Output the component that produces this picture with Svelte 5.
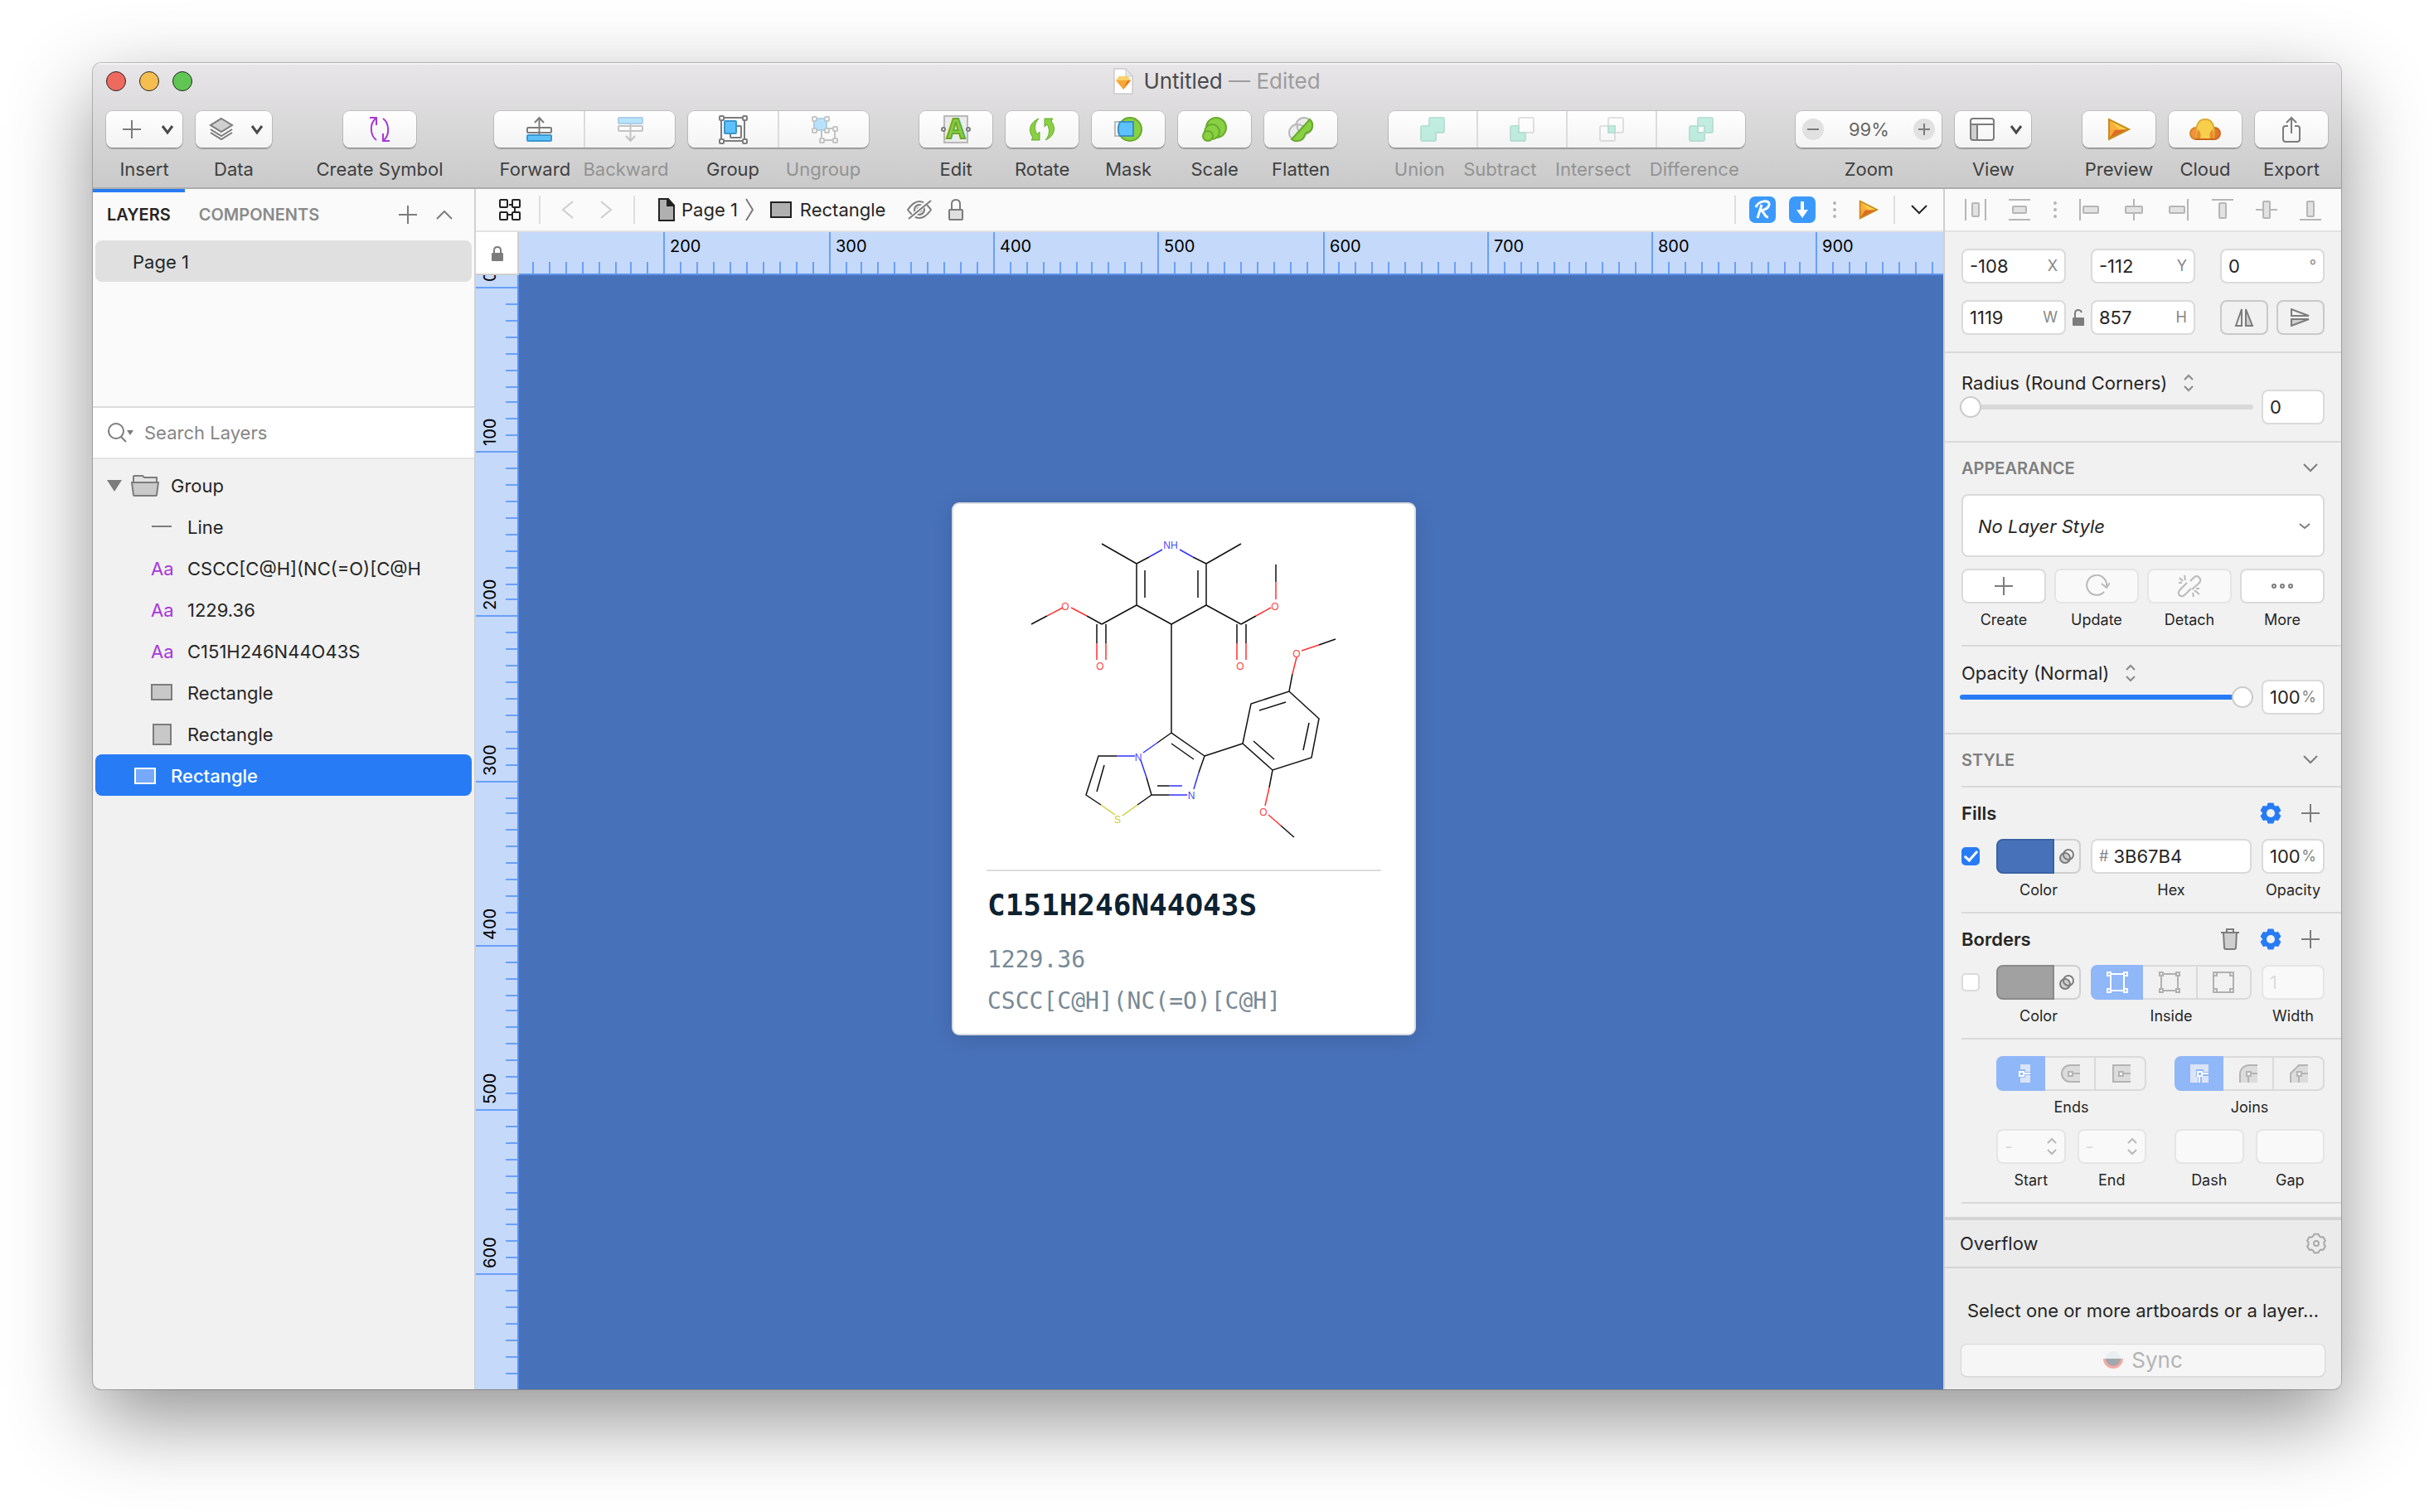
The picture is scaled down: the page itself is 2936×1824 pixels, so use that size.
<script>
  const H_SCALE = 1.986;
  const V_SCALE = 1.984;
  const even = (v) => 2 * Math.round(v / 2);

  const hTicks = Array.from({ length: 86 }, (_, i) => {
    const value = 120 + i * 10;
    return { value, at: even(174.6 + (value - 200) * H_SCALE), major: value % 100 === 0 };
  });
  const vTicks = Array.from({ length: 68 }, (_, i) => {
    const value = i * 10;
    return { value, at: even(14 + value * V_SCALE), major: value % 100 === 0 };
  });

  const layers = [
    { name: 'Line', icon: 'line' },
    { name: 'CSCC[C@H](NC(=O)[C@H', icon: 'text' },
    { name: '1229.36', icon: 'text' },
    { name: 'C151H246N44O43S', icon: 'text' },
    { name: 'Rectangle', icon: 'rect' },
    { name: 'Rectangle', icon: 'tallrect' }
  ];

  const shapeTools = ['Edit', 'Rotate', 'Mask', 'Scale', 'Flatten'];
  const booleanTools = ['Union', 'Subtract', 'Intersect', 'Difference'];
  const styleActions = [
    { name: 'Create', off: false },
    { name: 'Update', off: true },
    { name: 'Detach', off: true },
    { name: 'More', off: false }
  ];
  const alignTools = ['distH', 'distV', 'dots', 'alignL', 'alignC', 'alignR', 'alignT', 'alignM', 'alignB'];

  function gear(c, outer, inner) {
    const pts = [];
    for (let i = 0; i < 6; i++) {
      for (const [deg, r] of [[-22, inner], [-13, outer], [13, outer], [22, inner]]) {
        const a = ((i * 60 + deg - 90) * Math.PI) / 180;
        pts.push(`${(c + r * Math.cos(a)).toFixed(2)} ${(c + r * Math.sin(a)).toFixed(2)}`);
      }
    }
    return `M${pts.join('L')}Z`;
  }

  const bonds = [
    ['k', 'M181 50 223 74M307 74 349 50M223 74V124M307 74V124M233 82V115M297 82V115M223 124 265 147M307 124 265 147M223 124 181 147M307 124 349 147M223 74 238 66M307 74 291 66'],
    ['b', 'M238 66 254 57M291 66 275 57'],
    ['k', 'M181 147 163 137M96 147 115 137M349 147 367 137M391 75V96M175 147V170M186 147V170M344 147V170M355 147V170'],
    ['r', 'M163 137 144 127M115 137 134 127M367 137 385 127M391 96V117M175 170V190M186 170V190M344 170V190M355 170V190'],
    ['k', 'M265 147V278L305 306M265 278 248 290M265 291 292 310M305 306 298 326M305 306 351 291M199 306H177L162 353 180 365M184 317 175 349M235 332 241 353 224 365M241 353H262M248 342H262'],
    ['b', 'M248 290 231 302M298 326 292 346M221 306H199M228 311 235 332M262 353H284M262 342H278'],
    ['s', 'M180 365 197 377M224 365 206 378'],
    ['k', 'M351 291 361 243 407 228 443 261 434 308 387 323ZM371 251 403 241M431 266 424 299M364 288 389 310M407 228 411 207M443 172 463 165M387 323 383 344M397 390 413 404'],
    ['r', 'M411 207 416 187M422 179 443 172M383 344 378 366M382 377 397 390']
  ];
  const atoms = [
    ['b', 'NH', 264, 52], ['r', 'O', 137, 126], ['r', 'O', 390, 126], ['r', 'O', 179, 198], ['r', 'O', 348, 198],
    ['b', 'N', 225, 308], ['b', 'N', 289, 354], ['s', 'S', 200, 383], ['r', 'O', 416, 183], ['r', 'O', 376, 374]
  ];
</script>

{#snippet chevron()}
  <svg width="18" height="12" viewBox="0 0 18 12" class="ln dark"><path d="M3 2l6 8 6-8" stroke-width="3" /></svg>
{/snippet}

{#snippet updown()}
  <svg class="updown" width="14" height="22" viewBox="0 0 14 22"><path d="M2 7l5-5 5 5M2 15l5 5 5-5" /></svg>
{/snippet}

{#snippet plus()}
  <svg width="22" height="22" viewBox="0 0 22 22" class="ln"><path d="M11 0v22M0 11h22" /></svg>
{/snippet}

{#snippet play(size)}
  <svg width={size} height={size} viewBox="0 0 28 28">
    <path d="M1 1v26l26-13z" fill="#f9b13b" />
    <path d="M1 1l26 13H14z" fill="#f8cf4b" />
    <path d="M1 27V14l6 0 7 0z" fill="#f9a63a" />
    <path d="M1 27l8-12 18-1z" fill="#db6b25" />
    <path d="M2 2v24l24-12z" fill="none" stroke="#c98a1c" stroke-width="2" />
  </svg>
{/snippet}

{#snippet handles(points)}
  {#each points as [x, y]}
    <rect x={x - 2} y={y - 2} width="5" height="5" rx="1" fill="#fff" />
  {/each}
{/snippet}

{#snippet tool(name)}
  <svg width="36" height="36" viewBox="0 0 36 36" class="ln">
    {#if name === 'Symbol'}
      <g stroke="#a737d9"><path d="M14 31C7 26 5 12 13 5M6 4h8v9M22 5c7 5 9 19 1 26M30 32h-8v-9" /></g>
    {:else if name === 'Forward'}
      <rect x="4" y="16" width="29" height="6" rx="1" fill="#fff" />
      <rect x="4" y="25" width="29" height="7" rx="1" fill="#5cc1fd" stroke="#3b97cf" />
      <path d="M18.500 24V4M13 10l5.500-6 5.500 6" />
    {:else if name === 'Backward'}
      <rect x="4" y="4" width="29" height="7" rx="1" fill="#5cc1fd" stroke="#3b97cf" />
      <rect x="4" y="14" width="29" height="6" rx="1" fill="#fff" />
      <path d="M18.500 12v20M13 26l5.500 6 5.500-6" />
    {:else if name === 'Group'}
      <rect x="4" y="4" width="28" height="28" />
      <rect x="15" y="14" width="13" height="14" rx="1" fill="#fff" />
      <rect x="8" y="8" width="14" height="15" rx="1" fill="#5cc1fd" stroke="#3b97cf" />
      {@render handles([[4, 4], [32, 4], [4, 32], [32, 32]])}
    {:else if name === 'Ungroup'}
      <rect x="15" y="17" width="16" height="14" fill="#fff" />
      <rect x="6" y="5" width="15" height="14" fill="#5cc1fd" stroke="#3b97cf" />
      {@render handles([[6, 5], [21, 5], [6, 19], [21, 19], [31, 17], [15, 31], [31, 31]])}
    {:else if name === 'Edit'}
      <rect x="4" y="2" width="28" height="32" stroke="#b9b9b9" fill="#ececec" />
      <text x="18" y="29" class="glyph">A</text>
      <circle cx="3" cy="18" r="2" fill="#fff" /><circle cx="33" cy="18" r="2" fill="#fff" />
    {:else if name === 'Rotate'}
      <path class="green" stroke-width="1" d="M14 5C4 9 0 19 7 28L5 31H15V21L12 24C8 18 9 10 14 5Z" />
      <path class="green" stroke-width="1" d="M22 31C32 27 36 17 29 8L31 5H21V15L24 12C28 18 27 26 22 31Z" />
    {:else if name === 'Mask'}
      <rect x="2" y="9" width="18" height="17" fill="#fff" stroke="#b9b9b9" />
      <circle class="green" cx="20" cy="18" r="14" />
      <path d="M8 9h16v17H8C5 22 5 14 8 9z" fill="#5cc1fd" stroke="#3b8fc4" />
    {:else if name === 'Scale'}
      <circle class="green" cx="20" cy="16" r="12" />
      <circle class="green" cx="15" cy="21" r="9" />
      <circle class="green" cx="10" cy="26" r="6" />
    {:else if name === 'Flatten'}
      <circle cx="22" cy="14" r="10" fill="#ececec" stroke="#b9b9b9" />
      <circle cx="14" cy="22" r="10" fill="#ececec" stroke="#b9b9b9" />
      <path d="M14 12a10 10 0 0 0 8 12" stroke="#b9b9b9" />
      <path class="green" d="M29 6C35 12 32 21 25 22 23 23 23 25 22 27 20 32 11 34 7 30Z" />
    {:else if name === 'Union'}
      <path class="mint" d="M16 4h14a2 2 0 0 1 2 2v14a2 2 0 0 1-2 2h-8v8a2 2 0 0 1-2 2H6a2 2 0 0 1-2-2V16a2 2 0 0 1 2-2h8V6a2 2 0 0 1 2-2z" />
    {:else if name === 'Subtract'}
      <rect x="14" y="4" width="18" height="18" rx="2" fill="#fff" stroke="#bbb" />
      <path class="mint" d="M14 14v8h8v8a2 2 0 0 1-2 2H6a2 2 0 0 1-2-2V16a2 2 0 0 1 2-2z" />
    {:else if name === 'Intersect'}
      <rect x="14" y="4" width="18" height="18" rx="2" stroke="#bbb" />
      <rect x="4" y="14" width="18" height="18" rx="2" stroke="#bbb" />
      <rect class="mint" x="14" y="14" width="8" height="8" />
    {:else if name === 'Difference'}
      <path class="mint" fill-rule="evenodd" d="M16 4h14a2 2 0 0 1 2 2v14a2 2 0 0 1-2 2h-8v8a2 2 0 0 1-2 2H6a2 2 0 0 1-2-2V16a2 2 0 0 1 2-2h8V6a2 2 0 0 1 2-2zM14 14v8h8v-8z" />
    {/if}
  </svg>
{/snippet}

{#snippet align(name)}
  <svg width="26" height="26" viewBox="0 0 26 26" class="al">
    {#if name === 'distH'}
      <path d="M1 0v26M25 0v26" /><rect x="9" y="5" width="8" height="16" rx="1" />
    {:else if name === 'distV'}
      <path d="M0 1h26M0 25h26" /><rect x="5" y="9" width="16" height="8" rx="1" />
    {:else if name === 'alignL'}
      <path d="M1 0v26" /><rect x="5" y="9" width="18" height="8" rx="1" />
    {:else if name === 'alignC'}
      <path d="M13 0v26" /><rect x="3" y="9" width="20" height="8" rx="1" />
    {:else if name === 'alignR'}
      <path d="M25 0v26" /><rect x="3" y="9" width="18" height="8" rx="1" />
    {:else if name === 'alignT'}
      <path d="M0 1h26" /><rect x="9" y="5" width="8" height="18" rx="1" />
    {:else if name === 'alignM'}
      <path d="M0 13h26" /><rect x="9" y="3" width="8" height="20" rx="1" />
    {:else}
      <path d="M0 25h26" /><rect x="9" y="3" width="8" height="18" rx="1" />
    {/if}
  </svg>
{/snippet}

{#snippet vdots()}
  <svg width="4" height="22" viewBox="0 0 4 22" fill="#b4b4b4"><circle cx="2" cy="3" r="2" /><circle cx="2" cy="11" r="2" /><circle cx="2" cy="19" r="2" /></svg>
{/snippet}

{#snippet blend()}
  <svg width="18" height="18" viewBox="0 0 18 18" class="ln"><circle cx="7" cy="11" r="6" fill="#d0d0d0" /><circle cx="11" cy="7" r="6" /></svg>
{/snippet}

{#snippet solidGear()}
  <svg width="26" height="26" viewBox="0 0 26 26"><path d={gear(13, 11.5, 9)} fill="#277cf6" stroke="#277cf6" stroke-width="2.500" stroke-linejoin="round" /><circle cx="13" cy="13" r="5" fill="#f1f1f1" /></svg>
{/snippet}

{#snippet titled(id, text, trash)}
  <div class="sub">
    <h3 {id}>{text}</h3>
    {#if trash}
      <button class="bare" aria-label="Remove unused borders">
        <svg width="22" height="26" viewBox="0 0 22 26" class="ln"><path d="M3 5l1 18q0 2 2 2h10q2 0 2-2l1-18z" fill="#cfcfcf" /><path d="M0 5h22M7 4V1h8v3" /></svg>
      </button>
    {/if}
    <button class="bare" aria-label="{text} options">{@render solidGear()}</button>
    <button class="bare" aria-label="Add {text}">{@render plus()}</button>
  </div>
{/snippet}

{#snippet caps(kind)}
  <svg width="24" height="24" viewBox="0 0 24 24" class="cap" class:on={kind === 'butt' || kind === 'miter'}>
    {#if kind === 'butt'}
      <path class="area" d="M11 1h12v22H11v-6h6v-3h6v-4h-6V7h-6z" />
      <path d="M15 12h8" /><rect x="10" y="10" width="5" height="5" />
    {:else if kind === 'roundcap'}
      <path class="area" d="M24 1H12a11 11 0 0 0 0 22h12z" /><path d="M24 2H12a10 10 0 0 0 0 20h12M15 12h9" /><rect x="10" y="10" width="5" height="5" />
    {:else if kind === 'square'}
      <path class="area" d="M24 1H2v22h22z" /><path d="M24 2H3v20h21M15 12h9" /><rect x="10" y="10" width="5" height="5" />
    {:else if kind === 'miter'}
      <path class="area" d="M1 1h22v9h-6V7H8v9h2v7H1zM15 15h8v8h-8z" />
      <path d="M15 12h8M12 15v8" /><rect x="10" y="10" width="5" height="5" />
    {:else if kind === 'roundjoin'}
      <path class="area" d="M23 1h-9A12 12 0 0 0 2 13v10h21z" /><path d="M23 2h-9A11 11 0 0 0 2 13v10M15 12h8M12 15v8" /><rect x="10" y="10" width="5" height="5" />
    {:else}
      <path class="area" d="M23 1H12L2 12v11h21z" /><path d="M23 2H12L2 12v11M15 12h8M12 15v8" /><rect x="10" y="10" width="5" height="5" />
    {/if}
  </svg>
{/snippet}

{#snippet single(name, id)}
  <div class="item">
    <button class="tb" {id}>{@render tool(name)}</button>
    <label for={id}>{name}</label>
  </div>
{/snippet}

<div class="desktop">
  <main class="window">
    <header>
      <div class="titlebar">
        <div class="lights">
          <button class="red" aria-label="Close"></button>
          <button class="amber" aria-label="Minimize"></button>
          <button class="lime" aria-label="Zoom window"></button>
        </div>
        <h1>
          <svg width="24" height="32" viewBox="0 0 24 32">
            <path d="M1 1h14l8 9v21H1z" fill="#fff" stroke="#b8b8b8" /><path d="M15 1v9h8z" fill="#e9e9e9" stroke="#c6c6c6" />
            <path d="M7 10h10l4 5-9 11-9-11z" fill="#f7a737" /><path d="M7 10h10l4 5H3z" fill="#fbd06a" /><path d="M12 26l5-11h4z" fill="#e27a22" />
          </svg>
          <span>Untitled <i>— Edited</i></span>
        </h1>
      </div>
      <div class="toolbar">
        <div class="cluster">
          <div class="item">
            <button class="tb drop" id="t-insert">{@render plus()}{@render chevron()}</button>
            <label for="t-insert">Insert</label>
          </div>
          <div class="item">
            <button class="tb drop" id="t-data">
              <svg width="28" height="28" viewBox="0 0 28 28" class="ln"><path d="M14 1l13 8-13 8L1 9z" fill="#cfcfcf" /><path d="M1 14l13 8 13-8M1 18l13 8 13-8" /></svg>
              {@render chevron()}
            </button>
            <label for="t-data">Data</label>
          </div>
        </div>
        <div class="cluster symbol">
          <div class="item">
            <button class="tb" id="t-symbol">{@render tool('Symbol')}</button>
            <label for="t-symbol">Create Symbol</label>
          </div>
        </div>
        <div class="cluster">
          <div class="item two">
            <div class="segs">
              <button class="tb" id="t-fwd">{@render tool('Forward')}</button>
              <button class="tb" id="t-back" disabled>{@render tool('Backward')}</button>
            </div>
            <div class="names"><label for="t-fwd">Forward</label><label for="t-back" class="off">Backward</label></div>
          </div>
          <div class="item two">
            <div class="segs">
              <button class="tb" id="t-group">{@render tool('Group')}</button>
              <button class="tb" id="t-ungroup" disabled>{@render tool('Ungroup')}</button>
            </div>
            <div class="names halves"><label for="t-group">Group</label><label for="t-ungroup" class="off">Ungroup</label></div>
          </div>
        </div>
        <div class="cluster">
          {#each shapeTools as name}{@render single(name, 't-' + name)}{/each}
        </div>
        <div class="cluster">
          <div class="item four">
            <div class="segs">
              {#each booleanTools as name}<button class="tb" id={'t-' + name} disabled>{@render tool(name)}</button>{/each}
            </div>
            <div class="names">
              {#each booleanTools as name}<label for={'t-' + name} class="off">{name}</label>{/each}
            </div>
          </div>
        </div>
        <div class="cluster">
          <div class="item">
            <div class="zoom">
              <button aria-label="Zoom out"><svg width="14" height="14" viewBox="0 0 14 14" class="ln"><path d="M0 7h14" /></svg></button>
              <output id="t-zoom">99%</output>
              <button aria-label="Zoom in"><svg width="14" height="14" viewBox="0 0 14 14" class="ln"><path d="M0 7h14M7 0v14" /></svg></button>
            </div>
            <label for="t-zoom">Zoom</label>
          </div>
          <div class="item">
            <button class="tb drop" id="t-view">
              <svg width="30" height="28" viewBox="0 0 30 28" class="ln"><path d="M2 7h7v19H2z" fill="#cfcfcf" stroke="none" /><rect x="1" y="1" width="28" height="26" rx="3" /><path d="M1 8h28M9 8v19" /></svg>
              {@render chevron()}
            </button>
            <label for="t-view">View</label>
          </div>
        </div>
        <div class="cluster">
          <div class="item"><button class="tb" id="t-prev">{@render play(28)}</button><label for="t-prev">Preview</label></div>
          <div class="item">
            <button class="tb" id="t-cloud">
              <svg width="38" height="26" viewBox="0 0 38 26" stroke-width="2">
                <circle cx="8" cy="18" r="7" fill="#f2923a" stroke="#d9822a" /><circle cx="30" cy="18" r="7" fill="#e2762a" stroke="#cf6a22" />
                <path d="M9 25C6 6 12 1 19 1s13 5 10 24z" fill="#f8cf4b" stroke="#e0aa30" />
                <path d="M10 13q5 4 3 11H9q0-6 1-11zM28 13q-5 4-3 11h4q0-6-1-11z" fill="#e98a32" /><path d="M7 25h24" stroke="#c9641c" />
              </svg>
            </button>
            <label for="t-cloud">Cloud</label>
          </div>
          <div class="item">
            <button class="tb" id="t-export">
              <svg width="24" height="32" viewBox="0 0 24 32" class="ln"><path d="M8 12H5q-3 0-3 3v13q0 3 3 3h14q3 0 3-3V15q0-3-3-3h-3M12 21V2M6 8l6-6 6 6" /></svg>
            </button>
            <label for="t-export">Export</label>
          </div>
        </div>
      </div>
    </header>

    <div class="body">
      <aside class="left">
        <div class="pages">
          <div class="tabs">
            <button class="tab active">LAYERS</button>
            <button class="tab">COMPONENTS</button>
            <button class="bare add" aria-label="Add page">{@render plus()}</button>
            <button class="bare" aria-label="Collapse pages"><svg width="20" height="12" viewBox="0 0 20 12" class="ln"><path d="M1 11l9-9 9 9" /></svg></button>
          </div>
          <button class="page">Page 1</button>
        </div>
        <div class="search">
          <svg width="32" height="24" viewBox="0 0 32 24" class="ln"><circle cx="10" cy="10" r="9" /><path d="M16 17l6 6" /><path d="M23 9h8l-4 6z" fill="#7c7c7c" stroke="none" /></svg>
          <input type="search" placeholder="Search Layers" aria-label="Search Layers" />
        </div>
        <ul class="layers">
          <li>
            <button class="row group">
              <svg width="18" height="14" viewBox="0 0 18 14"><path d="M0 0h18L9 14z" fill="#7c7c7c" /></svg>
              <svg width="34" height="26" viewBox="0 0 34 26" class="ln"><path d="M3 9V2q0-1 1-1h10l2 2h15v6z" fill="#e2e2e2" /><path d="M1 9h32l-2 15q0 1-1 1H4q-1 0-1-1z" fill="#cacaca" /></svg>
              <span>Group</span>
            </button>
          </li>
          {#each layers as layer}
            <li>
              <button class="row child">
                <span class="kind">
                  {#if layer.icon === 'text'}
                    <span class="aa">Aa</span>
                  {:else}
                    <svg width="26" height="26" viewBox="0 0 26 26" class="ln">
                      {#if layer.icon === 'line'}<path d="M1 12h24" />
                      {:else if layer.icon === 'rect'}<rect x="1" y="3" width="24" height="18" fill="#c8c8c8" />
                      {:else}<rect x="3" y="1" width="21" height="24" fill="#c8c8c8" />{/if}
                    </svg>
                  {/if}
                </span>
                <span>{layer.name}</span>
              </button>
            </li>
          {/each}
          <li>
            <button class="row chosen">
              <svg width="26" height="20" viewBox="0 0 26 20"><rect x="1" y="1" width="24" height="18" fill="#76a9f9" stroke="#fff" stroke-width="2" /></svg>
              <span>Rectangle</span>
            </button>
          </li>
        </ul>
      </aside>

      <section class="centre">
        <nav class="crumbs">
          <button class="bare" aria-label="Components overview">
            <svg width="26" height="26" viewBox="0 0 26 26" class="ln ink"><rect x="1" y="1" width="9" height="9" rx="1" /><rect x="16" y="1" width="9" height="9" rx="1" /><rect x="1" y="16" width="9" height="9" rx="1" /><rect x="16" y="16" width="9" height="9" rx="1" /><path d="M12 7h4M19 10v6M10 19h5" /></svg>
          </button>
          <span class="bar b1"></span>
          <button class="bare fade prev" aria-label="Back"><svg width="16" height="22" viewBox="0 0 16 22" class="ln"><path d="M14 1L2 11l12 10" /></svg></button>
          <button class="bare fade next" aria-label="Next"><svg width="16" height="22" viewBox="0 0 16 22" class="ln"><path d="M2 1l12 10L2 21" /></svg></button>
          <span class="bar b2"></span>
          <a href="#page" class="crumb">
            <svg width="20" height="28" viewBox="0 0 20 28" class="ln ink"><path d="M1 1h11l7 8v18H1z" fill="#b0b0b0" /><path d="M11 1v8h8z" fill="#222" /></svg>
            Page 1
          </a>
          <svg width="10" height="28" viewBox="0 0 10 28" class="ln"><path d="M1 1l8 13-8 13" /></svg>
          <a href="#rectangle" class="crumb rec">
            <svg width="26" height="20" viewBox="0 0 26 20" class="ln ink"><rect x="1" y="1" width="24" height="18" fill="#b0b0b0" /></svg>
            Rectangle
          </a>
          <button class="bare eye" aria-label="Hide layer">
            <svg width="30" height="24" viewBox="0 0 30 24" class="ln"><path d="M1 12Q8 2 15 2t14 10Q22 22 15 22T1 12z" /><circle cx="15" cy="12" r="6" fill="#ddd" /><circle cx="15" cy="12" r="2" /><path d="M27 0L3 24" stroke="#fafafa" stroke-width="5" /><path d="M29 1L2 23" /></svg>
          </button>
          <button class="bare" aria-label="Lock layer">
            <svg width="20" height="28" viewBox="0 0 20 28" class="ln"><path d="M5 14V7q0-5 5-5t5 5v7" /><rect x="2" y="14" width="16" height="12" rx="1" fill="#e0e0e0" /></svg>
          </button>
          <span class="bar end"></span>
          <button class="app" aria-label="Runner plugin">
            <svg width="24" height="24" viewBox="0 0 24 24" class="ln white"><path d="M11 6L6 22M4 9C7 1 21-1 20 6c-1 5-6 6-10 7 4 0 4 8 9 8" stroke-width="3" /></svg>
          </button>
          <button class="app" aria-label="Download plugin">
            <svg width="16" height="22" viewBox="0 0 16 22"><path d="M6 1h4v10h5l-7 10-7-10h5z" fill="#fff" /></svg>
          </button>
          <span class="sep">{@render vdots()}</span>
          <button class="bare" aria-label="Run">{@render play(24)}</button>
          <span class="bar b3"></span>
          <button class="bare" aria-label="More plugins"><svg width="20" height="12" viewBox="0 0 20 12" class="ln ink"><path d="M1 1l9 9 9-9" /></svg></button>
        </nav>
        <div class="stage">
          <div class="corner">
            <svg width="14" height="18" viewBox="0 0 14 18"><path d="M3 9V5q0-4 4-4t4 4v4" fill="none" stroke="#7c7c7c" stroke-width="2" /><rect y="8" width="14" height="10" rx="1" fill="#7c7c7c" /></svg>
          </div>
          <div class="hruler">
            <svg width="100%" height="50">
              {#each hTicks as t}
                <rect x={t.at} y={t.major ? 0 : 36} width="2" height="50" />
                {#if t.major}<text x={t.at + 8} y="24">{t.value}</text>{/if}
              {/each}
            </svg>
          </div>
          <div class="vruler">
            <svg width="50" height="100%">
              {#each vTicks as t}
                <rect x={t.major ? 0 : 36} y={t.at} width="50" height="2" />
                {#if t.major}<text transform="translate(24 {t.at - 6}) rotate(-90)">{t.value}</text>{/if}
              {/each}
            </svg>
          </div>
          <div class="canvas">
            <article class="card">
              <svg class="mol" width="560" height="443" viewBox="0 0 560 443">
                {#each bonds as [c, d]}<path class={c} {d} />{/each}
                {#each atoms as [c, t, x, y]}<text class={c} {x} y={y + 4}>{t}</text>{/each}
              </svg>
              <hr />
              <h2>C151H246N44O43S</h2>
              <p>1229.36</p>
              <p>CSCC[C@H](NC(=O)[C@H]</p>
            </article>
          </div>
        </div>
      </section>

      <aside class="right">
        <div class="aligns">
          {#each alignTools as name}
            {#if name === 'dots'}{@render vdots()}{:else}<button class="bare" aria-label={name}>{@render align(name)}</button>{/if}
          {/each}
        </div>

        <div class="sec geo">
          <div class="line3">
            <label class="field"><input value="-108" /><span>X</span></label>
            <label class="field"><input value="-112" /><span>Y</span></label>
            <label class="field"><input value="0" /><span>°</span></label>
          </div>
          <div class="line3">
            <div class="linked">
              <label class="field"><input value="1119" /><span>W</span></label>
              <button class="bare" aria-label="Lock proportions"><svg width="14" height="20" viewBox="0 0 14 20"><path d="M3 10V5q0-4 4-4 3 0 4 3" fill="none" stroke="#7c7c7c" stroke-width="2" /><rect y="10" width="14" height="10" rx="1" fill="#7c7c7c" /></svg></button>
              <label class="field"><input value="857" /><span>H</span></label>
            </div>
            <div class="flips">
              <button aria-label="Flip horizontal"><svg width="24" height="22" viewBox="0 0 24 22" class="ln"><path d="M9 1v20H2z" /><path d="M14 1v20h8z" fill="#cfcfcf" /></svg></button>
              <button aria-label="Flip vertical"><svg width="24" height="22" viewBox="0 0 24 22" class="ln"><path d="M1 1v8h21z" /><path d="M1 21v-8h21z" fill="#cfcfcf" /></svg></button>
            </div>
          </div>
        </div>

        <div class="sec slide">
          <div class="pick"><select aria-label="Corner style"><option>Radius (Round Corners)</option></select>{@render updown()}</div>
          <input class="range" type="range" min="0" max="100" value="0" aria-label="Radius" />
          <label class="field"><input value="0" aria-label="Radius value" /></label>
        </div>

        <div class="sec look">
          <div class="head"><h2>APPEARANCE</h2><button class="bare" aria-label="Collapse appearance"><svg width="20" height="12" viewBox="0 0 20 12" class="ln"><path d="M2 1l8 8 8-8" /></svg></button></div>
          <div class="pick big">
            <select aria-label="Layer style"><option>No Layer Style</option></select>
            <svg width="14" height="10" viewBox="0 0 14 10" class="ln"><path d="M1 2l6 5 6-5" /></svg>
          </div>
          <div class="actions">
            {#each styleActions as a}
              <div class="cell">
                <button id={'s-' + a.name} disabled={a.off}>
                  <svg width="32" height="28" viewBox="0 0 32 28" class="ln">
                    {#if a.name === 'Create'}<path d="M16 3v22M5 14h22" />
                    {:else if a.name === 'Update'}<path d="M25 21A12 12 0 1 1 28 15M22 11l6 5 4-6" />
                    {:else if a.name === 'Detach'}<path d="M17 8l4-4q4-4 7 0 3 3-1 7l-8 7M13 10L5 18q-4 4-1 7 3 3 7-1l7-7M10 1l1 6M4 4l4 4M3 10h4M22 19l6 5M20 22l1 5M24 17h4" />
                    {:else}<circle cx="6" cy="14" r="2" /><circle cx="16" cy="14" r="2" /><circle cx="26" cy="14" r="2" />{/if}
                  </svg>
                </button>
                <label class="cap-text" for={'s-' + a.name}>{a.name}</label>
              </div>
            {/each}
          </div>
        </div>

        <div class="sec slide opacity inset-top">
          <div class="pick"><select aria-label="Blend mode"><option>Opacity (Normal)</option></select>{@render updown()}</div>
          <input class="range full" type="range" min="0" max="100" value="100" aria-label="Opacity" />
          <label class="field"><input value="100" aria-label="Opacity value" /><span>%</span></label>
        </div>

        <div class="sec plain">
          <div class="head"><h2>STYLE</h2><button class="bare" aria-label="Collapse style"><svg width="20" height="12" viewBox="0 0 20 12" class="ln"><path d="M2 1l8 8 8-8" /></svg></button></div>
        </div>

        <div class="inset">
          {@render titled('fills', 'Fills', false)}
          <div class="paint">
            <input type="checkbox" checked aria-labelledby="fills" />
            <div class="swatch blue"><button class="chip" id="f-color" aria-label="Fill color"></button><button class="mix" aria-label="Fill blending">{@render blend()}</button></div>
            <div class="field hex"><span>#</span><input id="f-hex" value="3B67B4" /></div>
            <div class="field"><input id="f-op" value="100" /><span>%</span></div>
            <label class="cap-text c2" for="f-color">Color</label>
            <label class="cap-text" for="f-hex">Hex</label>
            <label class="cap-text" for="f-op">Opacity</label>
          </div>
        </div>

        <div class="inset">
          {@render titled('borders', 'Borders', true)}
          <div class="paint">
            <input type="checkbox" aria-labelledby="borders" />
            <div class="swatch grey"><button class="chip" id="b-color" aria-label="Border color"></button><button class="mix" aria-label="Border blending">{@render blend()}</button></div>
            <div class="trio" role="group" aria-label="Border position">
              <button class="sel" aria-label="Center"><svg width="26" height="26" viewBox="0 0 26 26" class="frame"><path d="M5 3h16M5 23h16M5 3v20M21 3v20" /><g fill="#90b7f7"><rect x="1" y="1" width="4" height="4" /><rect x="21" y="1" width="4" height="4" /><rect x="1" y="21" width="4" height="4" /><rect x="21" y="21" width="4" height="4" /></g></svg></button>
              <button aria-label="Inside"><svg width="26" height="26" viewBox="0 0 26 26" class="frame"><path d="M3 3h20v20H3z" /><g fill="#f1f1f1"><rect x="1" y="1" width="4" height="4" /><rect x="21" y="1" width="4" height="4" /><rect x="1" y="21" width="4" height="4" /><rect x="21" y="21" width="4" height="4" /></g></svg></button>
              <button aria-label="Outside"><svg width="26" height="26" viewBox="0 0 26 26" class="frame"><path d="M1 1h24v24H1zM1 5h4V1M21 1v4h4M1 21h4v4M21 25v-4h4" /></svg></button>
            </div>
            <div class="field faint"><input id="b-w" value="1" disabled /></div>
            <label class="cap-text c2" for="b-color">Color</label>
            <span class="cap-text">Inside</span>
            <label class="cap-text" for="b-w">Width</label>
          </div>
        </div>

        <div class="inset strokes">
          <div class="cell">
            <div class="trio"><button class="sel" aria-label="Butt ends">{@render caps('butt')}</button><button aria-label="Round ends">{@render caps('roundcap')}</button><button aria-label="Square ends">{@render caps('square')}</button></div>
            <span class="cap-text">Ends</span>
          </div>
          <div class="cell">
            <div class="trio"><button class="sel" aria-label="Miter joins">{@render caps('miter')}</button><button aria-label="Round joins">{@render caps('roundjoin')}</button><button aria-label="Bevel joins">{@render caps('bevel')}</button></div>
            <span class="cap-text">Joins</span>
          </div>
          <div class="pair">
            {#each ['Start', 'End'] as n}
              <div class="cell">
                <div class="pick small"><select id={'e-' + n} disabled><option>-</option></select>{@render updown()}</div>
                <label class="cap-text" for={'e-' + n}>{n}</label>
              </div>
            {/each}
          </div>
          <div class="pair">
            {#each ['Dash', 'Gap'] as n}
              <div class="cell">
                <div class="field faint"><input id={'e-' + n} disabled /></div>
                <label class="cap-text" for={'e-' + n}>{n}</label>
              </div>
            {/each}
          </div>
        </div>
        <div class="inset rest"></div>

        <div class="overflow">
          <div class="ohead">
            <h2>Overflow</h2>
            <button class="bare" aria-label="Overflow settings"><svg width="26" height="26" viewBox="0 0 26 26" class="ln pale"><path d={gear(13, 11.5, 9.5)} stroke-linejoin="round" /><circle cx="13" cy="13" r="3" /></svg></button>
          </div>
          <p>Select one or more artboards or a layer…</p>
          <button class="sync" disabled>
            <svg width="24" height="22" viewBox="0 0 24 22"><path d="M3 9a9 9 0 0 1 18 0z" fill="#e9eff0" /><path d="M0 9h24a12 12 0 0 1-24 0z" fill="#f5aaa5" /><path d="M3 9h18a9 9 0 0 1-18 0z" fill="#a0a7ad" /></svg>
            Sync
          </button>
        </div>
      </aside>
    </div>
  </main>
</div>

<style>
  :global(body) { margin: 0; background: #fff; }
  .desktop, .desktop * { box-sizing: border-box; }
  .desktop {
    min-height: 100vh; padding: 76px 112px 148px; display: flex; overflow: hidden;
    font: 22px/30px Inter, "Liberation Sans", sans-serif; color: #262626;
  }
  button, input, select { font: inherit; color: inherit; margin: 0; padding: 0; border: 0; background: none; outline: 0; }
  button { display: flex; align-items: center; justify-content: center; }
  h1, h2, h3, p, ul { margin: 0; padding: 0; font-size: inherit; font-weight: inherit; list-style: none; }
  svg { display: block; flex: none; }
  .tb svg { overflow: visible; }
  .ln { fill: none; stroke: #7c7c7c; stroke-width: 2; }
  .ln.dark { stroke: #4a4a4a; }
  .ln.ink { stroke: #222; }
  .ln.white { stroke: #fff; }
  .ln.pale { stroke: #a9a9a9; }

  .window {
    flex: 1; min-width: 0; display: flex; flex-direction: column; border-radius: 10px; overflow: hidden; background: #f1f1f1;
    box-shadow: 0 0 0 1px rgba(0, 0, 0, .22), 0 36px 100px rgba(0, 0, 0, .43);
  }
  header { height: 152px; padding: 0 16px; background: linear-gradient(#e8e6e8, #cacaca); border-bottom: 2px solid #adadad; box-shadow: inset 0 2px #f4f4f4; }
  .titlebar { height: 44px; display: grid; grid-template-columns: 1fr auto 1fr; align-items: center; }
  .lights { display: flex; gap: 16px; }
  .lights button { width: 24px; height: 24px; border-radius: 50%; border: 1px solid; }
  .red { background: #ee6a5f; border-color: #dd5248; }
  .amber { background: #f6be4f; border-color: #dfa33b; }
  .lime { background: #61c554; border-color: #4cab3e; }
  h1 { display: flex; align-items: center; gap: 12px; font-size: 26px; color: #4a4a4a; }
  h1 i { font-style: normal; color: #9c9c9c; }

  .toolbar { display: flex; padding-top: 14px; }
  .cluster { display: flex; gap: 16px; margin-left: auto; }
  .cluster:first-child { margin-left: 0; }
  .cluster.symbol { margin-left: 54px; width: 152px; justify-content: center; }
  .item { display: flex; flex-direction: column; align-items: center; gap: 12px; width: 88px; color: #404040; }
  .item label { line-height: 28px; white-space: nowrap; }
  .item .off { color: #939393; }
  .item:has(.drop) { width: 92px; }
  .item:has(.zoom) { width: 176px; }
  .item.two { width: 218px; align-items: stretch; }
  .item.four { width: 430px; align-items: stretch; }
  .tb, .zoom {
    width: 100%; height: 44px; border-radius: 8px; background: linear-gradient(#fff, #f3f3f3);
    box-shadow: 0 0 0 1px rgba(0, 0, 0, .12), 0 2px 1px rgba(0, 0, 0, .22);
  }
  .drop { justify-content: space-between; padding: 0 9px 0 18px; }
  #t-insert { padding-left: 20px; }
  #t-data { padding-left: 17px; }
  .segs { display: flex; border-radius: 8px; box-shadow: 0 0 0 1px rgba(0, 0, 0, .12), 0 2px 1px rgba(0, 0, 0, .22); }
  .segs .tb { flex: 1; width: auto; box-shadow: none; border-radius: 0; }
  .segs .tb + .tb { border-left: 2px solid #dcdcdc; }
  .segs .tb:first-child { border-radius: 8px 0 0 8px; }
  .segs .tb:last-child { border-radius: 0 8px 8px 0; }
  .segs .tb:disabled svg { opacity: .42; }
  .names { display: flex; justify-content: space-between; padding: 0 7px; }
  .names.halves { padding: 0; }
  .names.halves label { flex: 1 0 50%; text-align: center; }
  .green { fill: #87d142; stroke: #69a92c; }
  .mint { fill: #72dcbc; stroke: #5cbfa0; }
  .glyph { font: bold 32px Inter, sans-serif; text-anchor: middle; fill: #87d142; stroke: #69a92c; stroke-width: 2; }
  .zoom { display: flex; align-items: center; justify-content: space-between; padding: 0 8px; color: #666; }
  .zoom button { width: 26px; height: 26px; border-radius: 50%; background: #e1e1e1; }

  .body { flex: 1; display: grid; grid-template-columns: 462px minmax(0, 1fr) 480px; }
  .left { border-right: 2px solid #d2d2d2; display: flex; flex-direction: column; }
  .pages { height: 264px; background: #fafafa; border-bottom: 2px solid #dcdcdc; }
  .tabs { height: 62px; display: flex; align-items: center; padding-right: 26px; }
  .tab { height: 62px; padding: 0 17px; font-size: 20px; font-weight: 600; color: #8a8a8a; }
  .tab.active { color: #262626; border-top: 4px solid #277cf6; padding-bottom: 4px; }
  .add { margin: 0 23px 0 auto; }
  .page { width: calc(100% - 6px); height: 50px; margin: 0 3px; padding: 2px 0 0 45px; justify-content: flex-start; background: #e0e0e0; border-radius: 8px; }
  .search { height: 62px; background: #fff; border-bottom: 2px solid #e4e4e4; display: flex; align-items: center; gap: 12px; padding-left: 18px; }
  .search input { flex: 1; min-width: 0; }
  .search input::placeholder { color: #868686; opacity: 1; }
  .layers { padding: 6px 3px; }
  .row { width: 100%; height: 50px; justify-content: flex-start; border-radius: 8px; white-space: nowrap; padding-top: 2px; }
  .row.group { padding-left: 14px; gap: 11px; }
  .row.group span { margin-left: 3px; }
  .row.child { padding-left: 67px; gap: 18px; }
  .kind { width: 26px; }
  .aa { color: #a737d9; }
  .row.chosen { padding-left: 47px; gap: 18px; background: #277cf6; color: #fff; font-weight: 500; }

  .bare { flex: none; }
  .centre { display: flex; flex-direction: column; min-width: 0; }
  .crumbs { height: 52px; background: #fafafa; border-bottom: 2px solid #e2e2e2; display: flex; align-items: center; padding: 0 19px 0 28px; }
  .bar { width: 2px; height: 34px; background: #dedede; }
  .b1 { margin: 0 25px 0 22px; }
  .b2 { margin: 0 28px 0 25px; }
  .next { margin-left: 30px; }
  .fade { opacity: .35; }
  .crumb { display: flex; align-items: center; gap: 8px; color: inherit; text-decoration: none; margin-right: 9px; }
  .rec { margin: 0 26px 0 20px; gap: 10px; }
  .eye { margin-right: 19px; }
  .end { margin: 0 16px 0 auto; }
  .app { width: 32px; height: 32px; border-radius: 7px; background: #3b99fc; }
  .app + .app { margin-left: 16px; }
  .sep { margin: 0 27px 0 21px; }
  .b3 { margin: 0 19px 0 18px; }

  .stage { flex: 1; display: grid; grid-template: 52px minmax(0, 1fr) / 52px minmax(0, 1fr); }
  .corner { background: #fff; border: solid #cfcfcf; border-width: 0 2px 2px 0; display: grid; place-items: center; padding: 2px 0 0 2px; }
  .hruler, .vruler { background: #c5d9fa; overflow: hidden; font-size: 20px; }
  .hruler { border-bottom: 2px solid #5b92ec; }
  .vruler { border-right: 2px solid #5b92ec; contain: size; }
  .hruler rect, .vruler rect { fill: #6aa0f9; }
  .canvas { background: #4771b9; position: relative; overflow: hidden; }
  .card {
    position: absolute; left: 522px; top: 274px; width: 560px; padding-bottom: 14px; background: #fff; border: 2px solid #d9dcdf; border-radius: 9px;
    box-shadow: 0 4px 24px rgba(0, 0, 0, .12); font: 28px/50px "DejaVu Sans Mono", monospace; color: #788a96;
  }
  .mol { margin: -2px 0 0 -2px; }
  .mol path { fill: none; stroke-width: 1.5; }
  .mol text { font: 12px "Liberation Sans", sans-serif; text-anchor: middle; }
  path.k { stroke: #111; }
  path.b { stroke: #33f; }
  path.r { stroke: #ff3333; }
  path.s { stroke: #cccc33; }
  text.b { fill: #4848ff; }
  text.r { fill: #f44; }
  text.s { fill: #cc3; }
  .card hr { margin: 0 40px 16px; border: 0; height: 2px; background: #ddd; }
  .card h2, .card p { margin: 0 41px; white-space: nowrap; }
  .card h2 { font-size: 36px; font-weight: bold; color: #0d2231; margin-bottom: 16px; }

  .right { border-left: 2px solid #cfcfcf; display: flex; flex-direction: column; }
  .aligns { height: 52px; background: #fafafa; border-bottom: 2px solid #e2e2e2; display: flex; align-items: center; justify-content: space-between; padding: 0 24px; }
  .al { fill: #e2e2e2; stroke: #b6b6b6; stroke-width: 2; }
  .sec { padding: 20px; border-bottom: 2px solid #d9d9d9; }
  .geo { display: grid; gap: 20px; }
  .line3 { display: grid; grid-template-columns: repeat(3, minmax(0, 1fr)); gap: 30px; }
  .linked { grid-column: span 2; display: flex; gap: 8px; }
  .flips { display: flex; gap: 10px; }
  .flips button { flex: 1; border: 2px solid #c9c9c9; border-radius: 8px; }
  .field { flex: 1; height: 42px; min-width: 0; background: #fff; border: 2px solid #dadada; border-radius: 8px; display: flex; align-items: center; padding: 0 8px; }
  .field input { flex: 1; width: 0; min-width: 0; }
  .field span { font-size: 18px; color: #868686; }
  .field.hex span { margin-right: 6px; }
  .faint { background: #f9f9f9; border-color: #e5e5e5; color: #dcdcdc; }
  .slide { display: grid; grid-template: 32px 34px / minmax(0, 1fr) 76px; column-gap: 12px; }
  .slide .pick { grid-column: 1 / 3; justify-self: start; }
  .slide .field { margin-top: -8px; }
  .opacity { padding: 16px 20px 22px; }
  .pick { display: inline-grid; align-items: center; }
  .pick > :global(*) { grid-area: 1 / 1; }
  .pick :global(svg) { justify-self: end; pointer-events: none; }
  .pick select { appearance: none; padding-right: 32px; line-height: 30px; }
  .updown { fill: none; stroke: #8a8a8a; stroke-width: 2; }
  .range { appearance: none; height: 26px; margin: 0 -2px; --fill: #d9d9d9; }
  .range.full { --fill: #277cf6; }
  .range::-webkit-slider-runnable-track { height: 6px; border-radius: 3px; background: var(--fill); }
  .range::-webkit-slider-thumb { appearance: none; width: 26px; height: 26px; margin-top: -10px; border-radius: 50%; background: #fff; border: 2px solid #cbcbcb; }
  .look { padding: 0 20px 18px; border: 0; }
  .head { height: 62px; display: flex; align-items: center; justify-content: space-between; padding-right: 7px; font-size: 20px; font-weight: 600; color: #7f7f7f; }
  .pick.big { display: grid; width: 100%; height: 76px; background: #fff; border: 2px solid #dadada; border-radius: 8px; padding: 2px 15px 0 18px; font-style: italic; }
  .actions { display: grid; grid-template-columns: repeat(4, 1fr); gap: 10px; margin-top: 14px; }
  .cell { display: flex; flex-direction: column; min-width: 0; }
  .actions button { height: 42px; background: #fff; border: 2px solid #dadada; border-radius: 8px; }
  .actions button:disabled { background: #f9f9f9; border-color: #e5e5e5; }
  .actions button:disabled svg { opacity: .5; }
  .cap-text { font-size: 18px; line-height: 24px; margin-top: 8px; text-align: center; }
  .inset-top { border-top: 2px solid; border-image: linear-gradient(90deg, transparent 20px, #d9d9d9 20px) 2 0 / 2px 0; border-bottom: 0; box-shadow: inset 0 -2px #d9d9d9; padding-bottom: 24px; }
  .plain { padding: 0 20px; border: 0; }
  .inset { margin-left: 20px; padding: 0 20px 14px 0; border-top: 2px solid #d9d9d9; }
  .sub { height: 62px; display: flex; align-items: center; gap: 25px; padding-right: 6px; }
  .sub h3 { margin-right: auto; font-weight: 600; }
  .sub button:last-child { margin-left: -1px; }
  .paint { display: grid; grid-template-columns: 30px 102px minmax(0, 1fr) 76px; column-gap: 12px; align-items: center; }
  .paint .c2 { grid-column: 2; }
  input[type='checkbox'] { appearance: none; width: 22px; height: 22px; border: 2px solid #dadada; border-radius: 5px; background: #fff; display: grid; place-items: center; }
  input[type='checkbox']:checked { background: #277cf6; border-color: #277cf6; }
  input[type='checkbox']:checked::before { content: ''; width: 6px; height: 13px; margin-top: -4px; border: solid #fff; border-width: 0 3px 3px 0; transform: rotate(42deg); }
  .swatch { display: flex; height: 42px; }
  .chip { width: 70px; border: 2px solid; border-radius: 8px 0 0 8px; }
  .mix { flex: 1; border: 2px solid #cfcfcf; border-left: 0; border-radius: 0 8px 8px 0; }
  .blue .chip { background: #4771b9; border-color: #3b62a6; }
  .grey .chip { background: #a1a1a1; border-color: #8a8a8a; }
  .trio { display: flex; height: 42px; border: 2px solid #dadada; border-radius: 8px; }
  .trio button { flex: 1; }
  .trio button + button + button { border-left: 2px solid #dadada; }
  .trio .sel { background: #90b7f7; margin: -2px 0 -2px -2px; border-radius: 8px 0 0 8px; }
  .frame { fill: none; stroke: #b0b0b0; stroke-width: 2; }
  .sel .frame { stroke: #fff; }
  .cap { fill: none; stroke: #b4b4b4; stroke-width: 2; }
  .cap .area { fill: #dcdcdc; stroke: none; }
  .cap rect { fill: #f1f1f1; }
  .cap.on { stroke: #fff; }
  .cap.on .area { fill: #dbe4f7; }
  .cap.on rect { fill: #90b7f7; }
  .strokes { display: grid; grid-template-columns: 1fr 1fr; gap: 14px 34px; padding: 20px 20px 14px 42px; }
  .pair { display: grid; grid-template-columns: 1fr 1fr; gap: 14px; }
  .strokes .field { flex: none; }
  .pick.small { display: grid; height: 42px; background: #f9f9f9; border: 2px solid #e5e5e5; border-radius: 8px; padding: 0 8px; color: #dcdcdc; }
  .pick.small select { opacity: 1; padding: 0; }
  .small :global(svg) { stroke: #b9b9b9; }
  .rest { flex: 1; padding: 0; min-height: 18px; }
  .overflow { background: #ebebeb; border-top: 4px solid #d5d5d5; padding-bottom: 16px; }
  .ohead { height: 58px; border-bottom: 2px solid #d5d5d5; display: flex; align-items: center; justify-content: space-between; padding: 0 17px 0 18px; }
  .overflow p { margin: 36px 20px 26px; text-align: center; white-space: nowrap; }
  .sync { width: calc(100% - 40px); height: 38px; margin: 0 20px; gap: 10px; font-size: 26px; color: #b4b4b4; background: #f6f6f6; border-radius: 7px; box-shadow: 0 0 0 1px #d8d8d8, 0 1px 2px #bbb; }
</style>
